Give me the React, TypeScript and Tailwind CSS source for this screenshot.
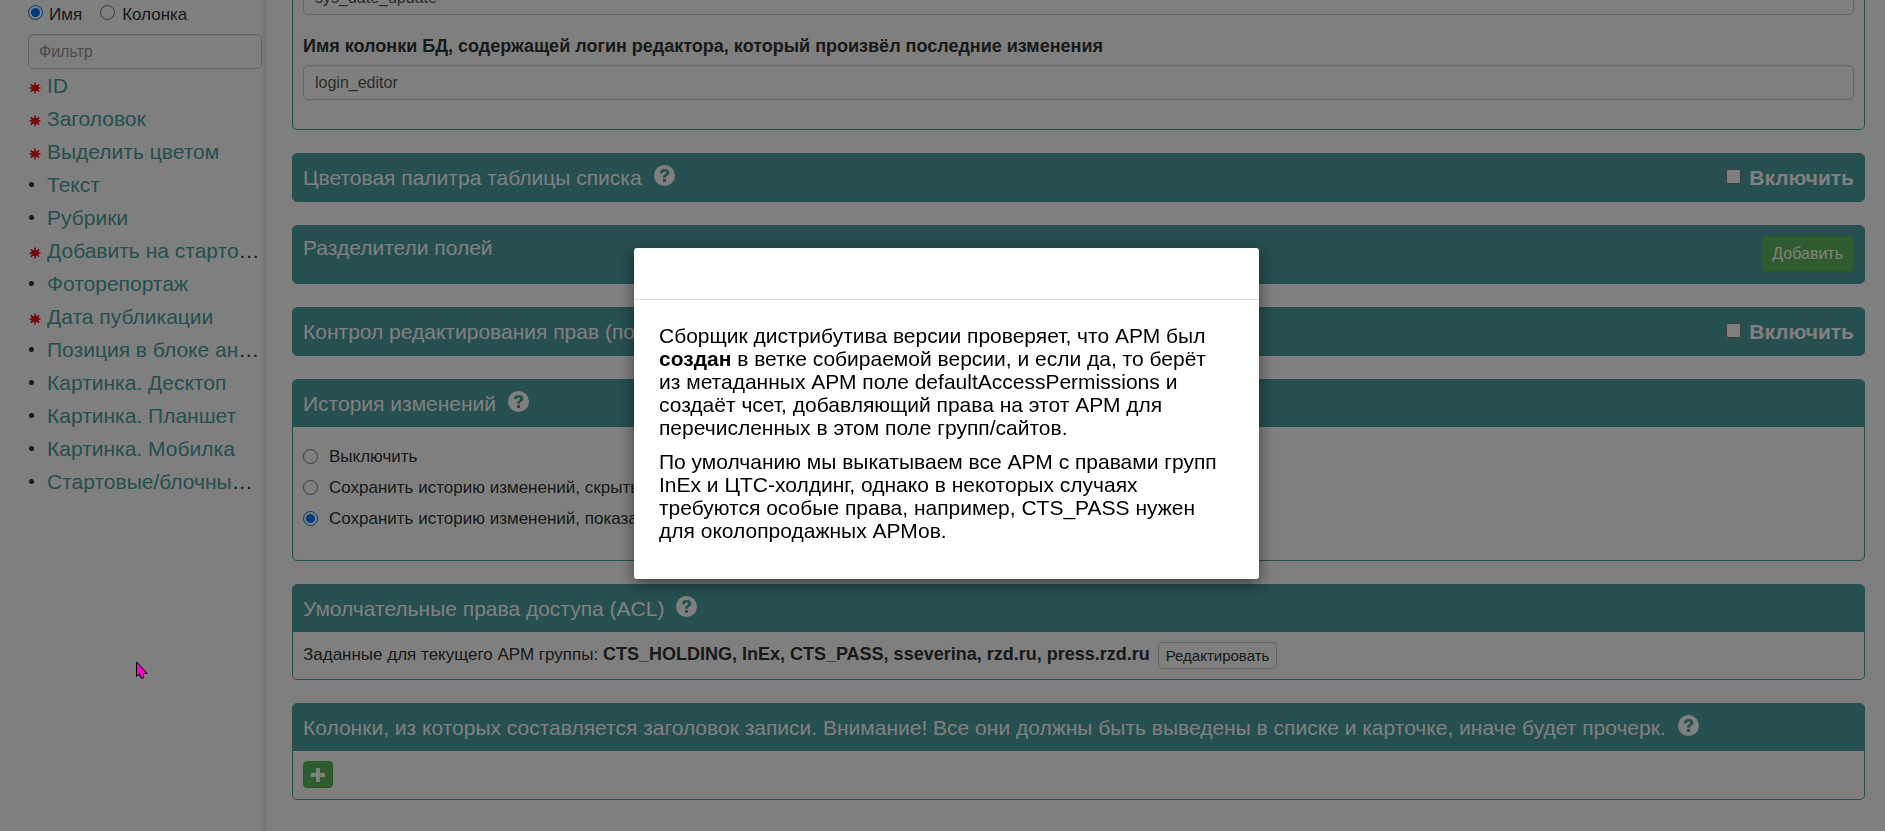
import { useState, type ReactNode } from "react";

interface Column {
    title: string;
    required?: boolean;
}

const columns: Column[] = [
    { title: "ID", required: true },
    { title: "Заголовок", required: true },
    { title: "Выделить цветом", required: true },
    { title: "Текст" },
    { title: "Рубрики" },
    { title: "Добавить на стартовую", required: true },
    { title: "Фоторепортаж" },
    { title: "Дата публикации", required: true },
    { title: "Позиция в блоке анонсов" },
    { title: "Картинка. Десктоп" },
    { title: "Картинка. Планшет" },
    { title: "Картинка. Мобилка" },
    { title: "Стартовые/блочные страницы" },
];

const historyModes = [
    "Выключить",
    "Сохранить историю изменений, скрыть",
    "Сохранить историю изменений, показать",
];

function HelpButton() {
    return (
        <button type="button" aria-label="Справка" className="ml-3 flex h-[27px] shrink-0 items-center pb-1">
            <svg viewBox="0 0 21 21" className="size-[21px]" fill="currentColor" aria-hidden="true">
                <path
                    fillRule="evenodd"
                    d="M10.5 0a10.5 10.5 0 1 1 0 21a10.5 10.5 0 0 1 0-21zM5.800 8.200h3.200c0-1.100.5-1.700 1.500-1.700s1.500.5 1.500 1.200c0 .8-.5 1.200-1.300 1.800C9.500 10.400 9 11.200 9 12.700h3c0-.9.3-1.300 1.200-1.900 1.300-.9 2.100-1.800 2.100-3.400C15.300 5.200 13.400 4 10.600 4 7.600 4 5.800 5.600 5.800 8.200zM9 14v3h3v-3z"
                />
            </svg>
        </button>
    );
}

function RequiredIcon() {
    return (
        <svg viewBox="0 0 12 12" className="mt-1 size-3" stroke="#ec1313" strokeWidth="1.600" aria-hidden="true">
            <path d="M6 .5v11M.5 6h11M1.800 2.300l8.400 7.400M10.200 2.300l-8.400 7.400" />
            <ellipse cx="6" cy="6" rx="3.200" ry="2.200" fill="#ec1313" />
        </svg>
    );
}

interface PanelProps {
    title: string;
    help?: boolean;
    action?: ReactNode;
    alignTop?: boolean;
    children?: ReactNode;
}

function Panel({ title, help, action, alignTop, children }: PanelProps) {
    return (
        <section className="overflow-hidden rounded-[5px] border border-[#4c9e9e] bg-white">
            <header
                className={`flex justify-between bg-[#4c9e9e] px-[10px] py-[10px] text-white ${alignTop ? "items-start" : "items-center"}`}
            >
                <div className="flex items-center">
                    <h3 className="text-[21px] leading-[23px]">{title}</h3>
                    {help && <HelpButton />}
                </div>
                {action}
            </header>
            {children}
        </section>
    );
}

function EnableToggle() {
    return (
        <label className="flex items-center gap-2 text-[21px] leading-[27px] font-bold">
            <input type="checkbox" className="-mt-[2px] size-[15px]" />
            Включить
        </label>
    );
}

function Sidebar() {
    const [mode, setMode] = useState("name");
    return (
        <aside className="w-[267px] shrink-0 border-r-[5px] border-[#f3f3f3] pl-7">
            <div className="flex h-[34px] items-start text-[17px] leading-[30px]">
                <label className="flex items-center gap-[6px]">
                    <input type="radio" name="mode" className="-mt-[6px] size-[15px]" checked={mode === "name"} onChange={() => setMode("name")} />
                    Имя
                </label>
                <label className="ml-[18px] flex items-center gap-[7px]">
                    <input type="radio" name="mode" className="-mt-[6px] size-[15px]" checked={mode === "column"} onChange={() => setMode("column")} />
                    Колонка
                </label>
            </div>
            <input
                type="text"
                aria-label="Фильтр"
                placeholder="Фильтр"
                className="block h-[35px] w-full rounded-[5px] border border-[#ccc] px-[10px] text-[16px] shadow-[inset_0_1px_1px_rgba(0,0,0,0.075)] placeholder:text-[#999]"
            />
            <ul>
                {columns.map((column) => (
                    <li key={column.title} className="flex h-[33px] items-center pr-px text-[21px]">
                        <span className="flex w-[19px] shrink-0 items-center pl-px">
                            {column.required ? <RequiredIcon /> : <span className="size-[5px] rounded-full bg-[#333]" />}
                        </span>
                        <span className="truncate text-[#333]">
                            <a href="#" className="text-[#4c9e9e]">
                                {column.title}
                            </a>
                        </span>
                    </li>
                ))}
            </ul>
        </aside>
    );
}

const fieldClass =
    "block h-[35px] w-full rounded-[5px] border border-[#ccc] bg-white px-[11px] text-[16px] text-[#555] shadow-[inset_0_1px_1px_rgba(0,0,0,0.075)]";

function Settings() {
    const [history, setHistory] = useState(2);
    return (
        <main className="flex min-w-0 flex-1 flex-col gap-[23px] pr-5 pl-[25px]">
            <section className="-mt-8 rounded-b-[5px] border border-[#4c9e9e] px-[10px] pt-[11px] pb-[29px]">
                <input aria-label="Дата изменения" className={fieldClass} defaultValue="sys_date_update" />
                <label htmlFor="editor" className="mt-[18px] mb-[5px] block text-[18px] leading-[27px] font-bold">
                    Имя колонки БД, содержащей логин редактора, который произвёл последние изменения
                </label>
                <input id="editor" className={fieldClass} defaultValue="login_editor" />
            </section>

            <Panel title="Цветовая палитра таблицы списка" help action={<EnableToggle />} />
            <Panel
                title="Разделители полей"
                alignTop
                action={
                    <button type="button" className="mb-px h-9 rounded-[5px] border border-[#4cae4c] bg-[#5cb85c] px-[10px] text-[16px]">
                        Добавить
                    </button>
                }
            />
            <Panel title="Контрол редактирования прав (по ролям)" action={<EnableToggle />} />

            <Panel title="История изменений" help>
                <div className="flex flex-col px-[10px] pt-[14px] pb-[26px] text-[17px]">
                    {historyModes.map((label, index) => (
                        <label key={label} className="flex h-[31px] items-center gap-[11px]">
                            <input
                                type="radio"
                                name="history"
                                className="size-[15px]"
                                checked={history === index}
                                onChange={() => setHistory(index)}
                            />
                            {label}
                        </label>
                    ))}
                </div>
            </Panel>

            <Panel title="Умолчательные права доступа (ACL)" help>
                <div className="flex items-start px-[10px] py-[10px] text-[17px] leading-[24px]">
                    <p>
                        Заданные для текущего АРМ группы:{" "}
                        <b className="text-[18px]">CTS_HOLDING, InEx, CTS_PASS, sseverina, rzd.ru, press.rzd.ru</b>
                    </p>
                    <button type="button" className="ml-2 h-[27px] rounded-[4px] border border-[#ccc] px-[7px] text-[15px]">
                        Редактировать
                    </button>
                </div>
            </Panel>

            <Panel
                title="Колонки, из которых составляется заголовок записи. Внимание! Все они должны быть выведены в списке и карточке, иначе будет прочерк."
                help
            >
                <div className="px-[10px] pt-[10px] pb-[11px]">
                    <button
                        type="button"
                        aria-label="Добавить колонку"
                        className="flex h-[27px] w-[30px] items-center justify-center rounded-[4px] border border-[#4cae4c] bg-[#5cb85c] text-white"
                    >
                        <svg viewBox="0 0 14 14" className="size-[14px]" fill="currentColor" aria-hidden="true">
                            <path d="M5 0h4v5h5v4H9v5H5V9H0V5h5z" />
                        </svg>
                    </button>
                </div>
            </Panel>
        </main>
    );
}

function HelpDialog() {
    return (
        <div className="fixed inset-0 flex items-start justify-center bg-black/50 pt-[248px] pl-2">
            <div role="dialog" aria-modal="true" className="w-[625px] rounded-[3px] bg-white shadow-[0_5px_15px_rgba(0,0,0,0.5)]">
                <div className="h-[52px] border-b border-[#ddd]" />
                <div className="space-y-[11px] pt-6 pr-8 pb-[37px] pl-[25px] text-[21px] leading-[23px] text-black">
                    <p>
                        Сборщик дистрибутива версии проверяет, что АРМ был <b>создан</b> в ветке собираемой версии, и если да, то берёт из
                        метаданных АРМ поле defaultAccessPermissions и создаёт чсет, добавляющий права на этот АРМ для перечисленных в этом
                        поле групп/сайтов.
                    </p>
                    <p>
                        По умолчанию мы выкатываем все АРМ с правами групп InEx и ЦТС-холдинг, однако в некоторых случаях требуются особые
                        права, например, CTS_PASS нужен для околопродажных АРМов.
                    </p>
                </div>
            </div>
        </div>
    );
}

function Pointer() {
    return (
        <svg viewBox="0 0 12 18" className="pointer-events-none fixed top-[661px] left-[136px] h-[18px] w-3" aria-hidden="true">
            <path d="M.5.8v14.700l3-2.500 1.500 4h2.500v-4.500h3.700z" fill="#ff00c8" stroke="#000" />
        </svg>
    );
}

export default function App() {
    return (
        <div className="flex min-h-screen overflow-hidden bg-white font-['Liberation_Sans',Arial,sans-serif] text-[#333]">
            <Sidebar />
            <Settings />
            <HelpDialog />
            <Pointer />
        </div>
    );
}
